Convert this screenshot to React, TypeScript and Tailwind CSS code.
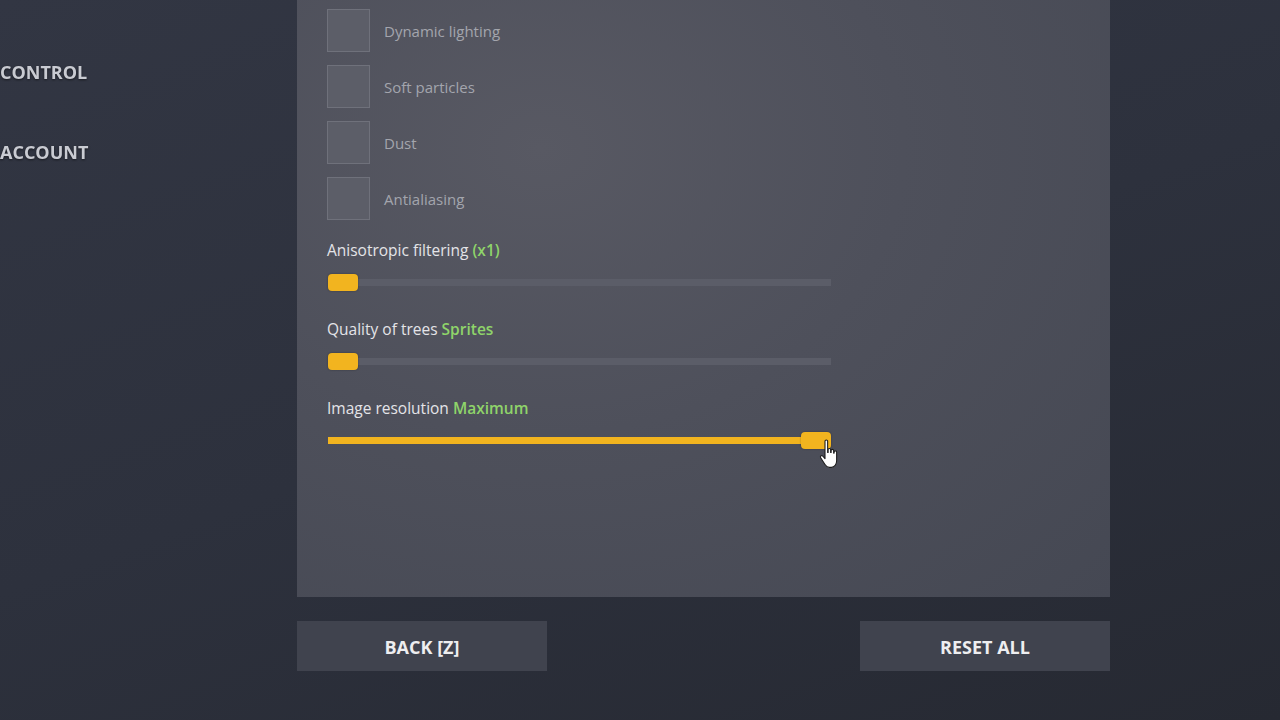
import { useState } from "react";

const checkboxes = ["Dynamic lighting", "Soft particles", "Dust", "Antialiasing"];

type SliderProps = {
  label: string;
  value: string;
  percent: number;
};

function Slider({ label, value, percent }: SliderProps) {
  return (
    <div className="flex flex-col">
      <div className="h-[22px] text-[15.5px] leading-[22px] text-[#e4e4e8]">
        {label} <span className="font-semibold text-[#8fd46a]">{value}</span>
      </div>
      <div className="relative ml-px mt-[18px] h-[7px] w-[503px] bg-[#5b5d68]">
        <div className="h-full bg-[#f2b41f]" style={{ width: `${percent}%` }} />
        <div
          className="absolute top-[-5px] h-[17px] w-[30px] rounded-[4px] bg-[#f2b41f] shadow-[0_0_2px_rgba(0,0,0,0.35)]"
          style={{ left: `calc(${percent}% - ${percent * 0.3}px)` }}
        />
      </div>
    </div>
  );
}

function HandCursor() {
  return (
    <svg
      className="pointer-events-none absolute left-[819px] top-[438px]"
      width="24"
      height="36"
      viewBox="0 0 20 30"
    >
      <path
        d="M5 2.5c0-1.2 2.2-1.2 2.2 0V12h.4V9.6c0-1.2 2.1-1.2 2.1 0V12h.4v-1.6c0-1.2 2.1-1.2 2.1 0V12.6h.4v-1c0-1.2 2.1-1.2 2.1 0V19c0 3-1.8 5.5-4.4 5.5H8.6C6.9 24.5 6 23.6 5 22.1L1.4 16.5c-.8-1.2.7-2.4 1.7-1.5L5 17.2z"
        fill="#ffffff"
        stroke="#1c1c1c"
        strokeWidth="0.9"
        strokeLinejoin="round"
      />
    </svg>
  );
}

export default function App() {
  const [checked] = useState<boolean[]>([false, false, false, false]);

  return (
    <div
      className="relative flex h-[720px] w-[1280px] overflow-hidden bg-[linear-gradient(160deg,#323643_0%,#2d313d_50%,#262932_100%)] font-['Open_Sans',sans-serif]"
    >
      {/* Side nav */}
      <div className="flex w-[297px] flex-col pt-[60px]">
        <div className="text-[18px] font-bold leading-[24px] text-[#c9cbd2] drop-shadow-[0_1px_1px_rgba(0,0,0,0.5)]">
          CONTROL
        </div>
        <div className="mt-[56px] text-[18px] font-bold leading-[24px] text-[#c9cbd2] drop-shadow-[0_1px_1px_rgba(0,0,0,0.5)]">
          ACCOUNT
        </div>
      </div>

      {/* Main column */}
      <div className="flex w-[813px] flex-col">
        <div className="h-[597px] bg-[radial-gradient(ellipse_at_30%_25%,#585963_0%,#4e505b_45%,#454853_100%)] pl-[30px] pt-[9px]">
          <div className="flex flex-col gap-[13px]">
            {checkboxes.map((name, i) => (
              <div key={name} className="flex items-center gap-[14px]">
                <div
                  className={`h-[43px] w-[43px] border border-[#6f717b] ${
                    checked[i] ? "bg-[#f2b41f]" : "bg-[#5c5e68]"
                  }`}
                />
                <span className="pt-px text-[15px] text-[#a3a5ad]">{name}</span>
              </div>
            ))}
          </div>

          <div className="mt-[19px] flex flex-col gap-[32px]">
            <Slider label="Anisotropic filtering" value="(x1)" percent={0} />
            <Slider label="Quality of trees" value="Sprites" percent={0} />
            <Slider label="Image resolution" value="Maximum" percent={100} />
          </div>
        </div>

        <div className="mt-[24px] flex justify-between">
          <button className="h-[50px] w-[250px] bg-[#40434e] pt-[2px] text-[18px] font-bold text-[#eeeef0]">
            BACK [Z]
          </button>
          <button className="h-[50px] w-[250px] bg-[#40434e] pt-[2px] text-[18px] font-bold text-[#eeeef0]">
            RESET ALL
          </button>
        </div>
      </div>

      <HandCursor />
    </div>
  );
}
